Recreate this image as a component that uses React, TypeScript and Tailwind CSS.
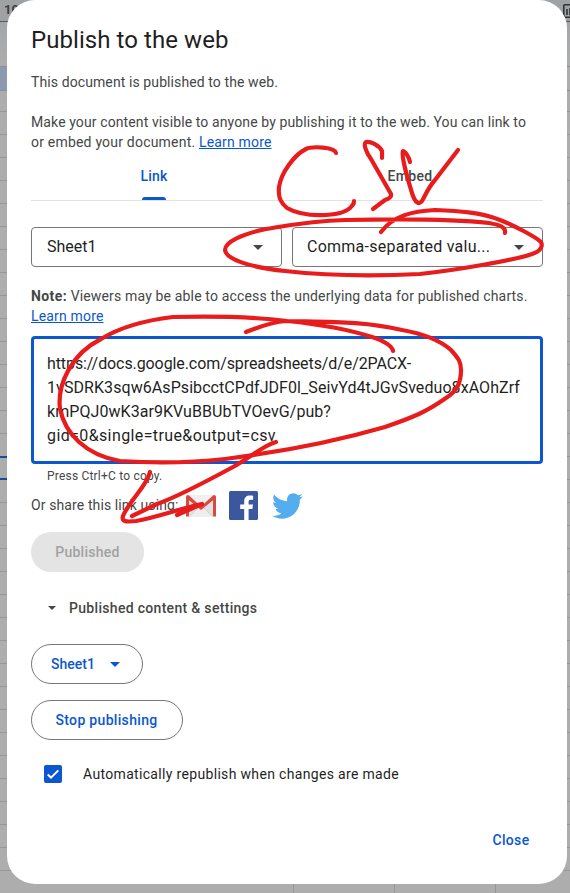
const rowsBelowHeader = Array.from({ length: 33 }, (_, i) => i);

function SheetBackdrop() {
  return (
    <div className="flex h-full flex-col overflow-hidden bg-[#adadad]">
      <div className="flex h-[22px] shrink-0 justify-between border-b border-[#55585a] bg-[#9fa2a5] pl-[4px] text-[13px] leading-[20px] font-bold text-[#3c3f41]">
        <span>100</span>
        <svg className="mt-[4px] -mr-[7px] h-[14px] w-[14px]" viewBox="0 0 14 14" fill="none" stroke="#303336" strokeWidth="1.6">
          <rect x="0.8" y="0.8" width="12.4" height="12.4" rx="1" />
          <path d="M4 5v6M7 4v7M10 7v4" />
        </svg>
      </div>
      <div className="h-[45px] shrink-0 border-b border-[#919191] bg-linear-to-b from-[#a3a6a9] to-[#adadad]" />
      <div className="flex h-[24px] shrink-0 border-b border-[#919191]">
        <div className="w-10 bg-[#8d99b1]" />
      </div>
      <div className="h-[21px] shrink-0 border-b border-[#979797]" />
      {rowsBelowHeader.map((row) => (
        <div key={row} className="flex h-[23px] shrink-0 border-b border-[#979797]">
          {row === 15 && <div className="-mt-px h-[24px] w-10 shrink-0 border-y-2 border-[#134d9c]" />}
        </div>
      ))}
      <div className="flex h-[22px] shrink-0 pl-[293px]">
        <div className="w-[101px] border-l border-[#979797]" />
        <div className="w-[101px] border-l border-[#979797]" />
        <div className="w-[75px] border-l border-[#979797]" />
      </div>
    </div>
  );
}

function Caret({ className }: { className: string }) {
  return (
    <svg className={className} viewBox="0 0 10 5" fill="currentColor" preserveAspectRatio="none">
      <path d="M0 0h10L5 5z" />
    </svg>
  );
}

function GmailIcon() {
  return (
    <svg className="h-[22px] w-[30px]" viewBox="0 0 30 22">
      <rect x="1" y="0.5" width="28" height="21" rx="1.5" fill="#e2e2e2" />
      <path d="M3.5 21.5 15 11l11.5 10.5z" fill="#eeeeee" />
      <path d="M3.5 21.5 12 13M26.500 21.500 18 13" stroke="#c8c8c8" strokeWidth="0.7" />
      <path d="M3 1h24L15 12z" fill="#f0f0f0" />
      <path d="M0 2C0 .8.8 0 2 0l1 .4L15 11.500 27 .4 28 0c1.200 0 2 .8 2 2v19.500h-3V5.200L15 15 3 5.200v16.300H0z" fill="#d54b3d" />
    </svg>
  );
}

function FacebookIcon() {
  return (
    <svg className="h-[29px] w-[29px]" viewBox="0 0 29 29">
      <rect width="29" height="29" rx="1.6" fill="#3b579d" />
      <path d="M15.200 29V17.900h-4v-4.400h4v-3.200c0-3.800 2.300-5.700 5.700-5.700 1.600 0 2.700.1 3.200.2v3.900h-2.300c-1.800 0-2.200.9-2.200 2.200v2.600h4.400l-.6 4.400h-3.800V29z" fill="#fff" />
    </svg>
  );
}

function TwitterIcon() {
  return (
    <svg className="h-[26px] w-[31px]" viewBox="0 2 24 20" preserveAspectRatio="none" fill="#55acee">
      <path d="M23.954 4.569c-.885.389-1.830.654-2.825.775 1.014-.611 1.794-1.574 2.163-2.723-.951.555-2.005.959-3.127 1.184-.896-.959-2.173-1.559-3.591-1.559-2.717 0-4.920 2.203-4.920 4.917 0 .390.045.765.127 1.124C7.691 8.094 4.066 6.130 1.640 3.161c-.427.722-.666 1.561-.666 2.475 0 1.710.870 3.213 2.188 4.096-.807-.026-1.566-.248-2.228-.616v.061c0 2.385 1.693 4.374 3.946 4.827-.413.111-.849.171-1.296.171-.314 0-.615-.030-.916-.086.631 1.953 2.445 3.377 4.604 3.417-1.680 1.319-3.809 2.105-6.102 2.105-.390 0-.779-.023-1.170-.067 2.189 1.394 4.768 2.209 7.557 2.209 9.054 0 13.999-7.496 13.999-13.986 0-.209 0-.420-.015-.630.961-.689 1.800-1.560 2.460-2.548z" />
    </svg>
  );
}

function RedMarkup() {
  return (
    <svg className="pointer-events-none absolute inset-0 h-[893px] w-[570px]" viewBox="0 0 570 893" fill="none" stroke="#e81c1c" strokeWidth="4.2" strokeLinecap="round" strokeLinejoin="round">
      <path d="M336 153C335 147 312 146 306 149C294 155 281 173 279 187C278 198 281 203 287 208C304 218 340 217 350 208C353 205 354 204 354 201" />
      <path d="M382 158V151C379 145 370 141 366 142C363 144 366 152 371 159L391 194C392 198 388 199 385 200L373 209" />
      <path d="M410 162C409 157 405 151 403 151C401 154 407 177 412 193C415 203 419 205 422 201C426 194 428 188 435 180L458 150" />
      <path d="M505 233C506 227 500 225 489 223C445 218 390 219 345 220C310 221 285 226 266 229C242 234 225 242 225 250C226 259 248 267 285 271C330 276 380 276 420 274C457 270 515 260 532 254C541 251 543 246 541 242C536 237 513 225 500 220C480 212 458 211 435 210C412 211 393 216 381 232" />
      <path d="M246 332C256 328 268 323 285 321C330 322 365 321 402 330C424 334 441 341 451 350C459 359 461 362 461 370C461 383 457 391 446 398C426 412 414 417 385 427C330 443 280 452 225 459C190 463 150 463 120 461C85 455 65 433 60 409C57 385 71 354 101 339C122 326 148 320 173 317C216 316 256 317 287 321C317 324 344 328 372 337C384 341 392 345 393 351" />
      <path d="M276 442C264 445 251 457 233 467C209 480 177 497 157 504L132 516" />
      <path d="M150 472C147 486 129 501 123 516C121 522 127 522 136 521C158 517 178 509 202 504L177 515" />
    </svg>
  );
}

export default function App() {
  return (
    <div className="relative h-[893px] w-[570px] overflow-hidden font-['Roboto','Liberation_Sans',sans-serif] whitespace-nowrap">
      <SheetBackdrop />
      <main className="absolute top-0 left-[7px] flex h-[884px] w-[560px] flex-col rounded-[28px] bg-white px-6 text-[14px] leading-5 text-[#444746]">
        <h1 className="mt-6 text-[24px] leading-8 tracking-[0.065px] text-[#1f1f1f]">Publish to the web</h1>
        <p className="mt-4 tracking-[0.099px]">This document is published to the web.</p>
        <p className="mt-5">
          <span className="block tracking-[0.11px]">Make your content visible to anyone by publishing it to the web. You can link to</span>
          <span className="block tracking-[0.204px]">or embed your document. <a className="tracking-[0.167px] text-[#0b57d0] underline">Learn more</a></span>
        </p>
        <div className="flex h-[49px] border-b border-[#e1e3e1] font-medium">
          <div className="flex w-[246px] flex-col items-center justify-between pt-[14px]">
            <span className="tracking-[0.194px] text-[#0b57d0]">Link</span>
            <span className="h-[3px] w-6 rounded-t-[3px] bg-[#0b57d0]" />
          </div>
          <div className="w-[266px] pt-[14px] text-center tracking-[0.328px]">Embed</div>
        </div>
        <div className="mt-[26px] flex gap-[10px] text-[16px] text-[#1f1f1f]">
          <div className="flex h-10 w-[251px] items-center justify-between rounded-[4px] border border-[#747775] pr-[18px] pl-[15px]">
            <span>Sheet1</span>
            <Caret className="h-[5px] w-[10px] text-[#444746]" />
          </div>
          <div className="flex h-10 w-[251px] items-center justify-between rounded-[4px] border border-[#747775] pr-[18px] pl-[14px]">
            <span className="tracking-[0.25px]">Comma-separated valu...</span>
            <Caret className="h-[5px] w-[10px] text-[#444746]" />
          </div>
        </div>
        <p className="mt-[19px]">
          <b className="tracking-[0.396px]">Note:</b><span className="tracking-[0.158px]"> Viewers may be able to access the underlying data for published charts.</span>
          <a className="block tracking-[0.167px] text-[#0b57d0] underline">Learn more</a>
        </p>
        <div className="mt-[10px] flex h-32 flex-col rounded-[4px] border-3 border-[#0b57d0] px-[13px] py-[13px] text-[16px] leading-6 text-[#1f1f1f]">
          <span className="tracking-[-0.09px]">https://docs.google.com/spreadsheets/d/e/2PACX-</span>
          <span className="tracking-[0.072px]">1vSDRK3sqw6AsPsibcctCPdfJDF0l_SeivYd4tJGvSveduo8xAOhZrf</span>
          <span className="tracking-[0.063px]">kmPQJ0wK3ar9KVuBBUbTVOevG/pub?</span>
          <span className="tracking-[0.391px]">gid=0&amp;single=true&amp;output=csv</span>
        </div>
        <p className="mt-1 pl-4 text-[12px] leading-4 tracking-[0.2px]">Press Ctrl+C to copy.</p>
        <div className="mt-[5px] flex h-[33px] items-center">
          <span className="w-[155px] pb-[2px] tracking-[0.11px]">Or share this link using:</span>
          <GmailIcon />
          <span className="ml-[13px]"><FacebookIcon /></span>
          <span className="ml-[14px]"><TwitterIcon /></span>
        </div>
        <button className="mt-[10px] h-10 w-[113px] shrink-0 rounded-full bg-[#e4e4e4] font-medium tracking-[0.267px] text-[#a1a1a1]">Published</button>
        <div className="mt-[26px] flex items-center pl-[17px] font-medium">
          <Caret className="mr-[13px] h-1 w-2" />
          <span className="tracking-[0.31px]">Published content &amp; settings</span>
        </div>
        <button className="mt-[26px] flex h-10 w-[112px] shrink-0 items-center justify-between rounded-full border border-[#747775] pr-[22px] pl-[19px] font-medium text-[#0b57d0]">
          Sheet1
          <Caret className="h-[5px] w-[10px]" />
        </button>
        <button className="mt-4 h-10 w-[152px] shrink-0 rounded-full border border-[#747775] pr-[1px] font-medium tracking-[0.319px] text-[#0b57d0]">Stop publishing</button>
        <label className="mt-6 flex items-center pl-[13px] text-[#1f1f1f]">
          <span className="flex h-[18px] w-[18px] items-center justify-center rounded-[2px] bg-[#0b57d0]">
            <svg className="h-[18px] w-[18px]" viewBox="0 0 18 18" fill="none" stroke="#fff" strokeWidth="2">
              <path d="M3.700 9.500 7 12.600 14.300 5.400" />
            </svg>
          </span>
          <span className="ml-[21px] tracking-[0.329px]">Automatically republish when changes are made</span>
        </label>
        <div className="mt-[46px] flex justify-end pr-[13.5px] font-medium tracking-[0.329px] text-[#0b57d0]">Close</div>
      </main>
      <RedMarkup />
    </div>
  );
}
